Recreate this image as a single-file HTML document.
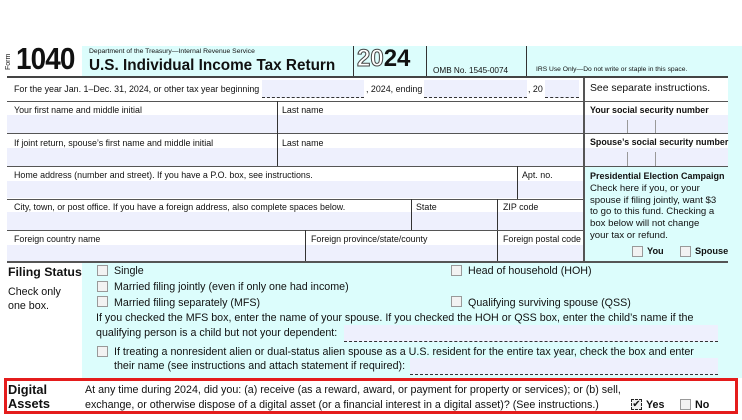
<!DOCTYPE html>
<html><head><style>
*{margin:0;padding:0;box-sizing:border-box}
body{width:742px;height:420px;background:#fff;position:relative;overflow:hidden;font-family:"Liberation Sans",Arial,sans-serif;color:#111}
div,span{position:absolute}
.t{font-size:8.9px;white-space:nowrap}
.f{font-size:10.7px;white-space:nowrap}
.lav{background:#eef0fd}
.cy{background:#dcfdfc}
.w{background:#fff}
.hl{height:1px;background:#555}
.vl{width:1px;background:#333}
.cb{width:11px;height:11px;border:1px solid #999;background:#f2f2f2}
.dash{border-bottom:1px dashed #333}
</style></head><body>
<div class="cy" style="left:82px;top:46px;width:660px;height:32px"></div>
<div class="cy" style="left:728px;top:78px;width:14px;height:300px"></div>
<div class="cy" style="left:584px;top:166px;width:144px;height:96px"></div>
<div class="cy" style="left:82px;top:262px;width:660px;height:116px"></div>
<div style="left:5px;top:70px;font-size:7px;transform:rotate(-90deg);transform-origin:left top;">Form</div>
<div style="left:16px;top:41px;font-size:31px;font-weight:bold;letter-spacing:-1px;transform:scaleX(0.9);transform-origin:left">1040</div>
<div class="t" style="left:89px;top:48px;font-size:6.8px">Department of the Treasury—Internal Revenue Service</div>
<div style="left:89px;top:57px;font-size:15.3px;font-weight:bold;white-space:nowrap">U.S. Individual Income Tax Return</div>
<div class="vl" style="left:353px;top:46px;height:32px"></div>
<div style="left:357px;top:45px;font-size:24px;font-weight:bold;white-space:nowrap"><span style="position:static;color:#fff;-webkit-text-stroke:1px #444">20</span>24</div>
<div class="vl" style="left:426px;top:46px;height:32px"></div>
<div class="t" style="left:433px;top:66px;font-size:8.2px">OMB No. 1545-0074</div>
<div class="vl" style="left:526px;top:46px;height:32px"></div>
<div class="t" style="left:536px;top:66px;font-size:6.7px">IRS Use Only—Do not write or staple in this space.</div>
<div style="left:7px;top:76px;width:721px;height:2px;background:#444"></div>
<div class="t" style="left:14px;top:84px">For the year Jan. 1–Dec. 31, 2024, or other tax year beginning</div>
<div class="lav dash" style="left:262px;top:80px;width:102px;height:18px"></div>
<div class="t" style="left:366px;top:84px">, 2024, ending</div>
<div class="lav dash" style="left:424px;top:80px;width:103px;height:18px"></div>
<div class="t" style="left:528px;top:84px">, 20</div>
<div class="lav dash" style="left:545px;top:80px;width:34px;height:18px"></div>
<div class="t" style="left:590px;top:83px;font-size:10.4px">See separate instructions.</div>
<div class="hl" style="left:7px;top:101px;width:721px"></div>
<div class="lav" style="left:7px;top:115px;width:721px;height:18px"></div>
<div class="lav" style="left:7px;top:148px;width:721px;height:18px"></div>
<div class="lav" style="left:7px;top:181px;width:577px;height:17px"></div>
<div class="lav" style="left:7px;top:212px;width:577px;height:18px"></div>
<div class="lav" style="left:7px;top:245px;width:577px;height:17px"></div>
<div class="t" style="left:14px;top:105px">Your first name and middle initial</div>
<div class="t" style="left:282px;top:105px">Last name</div>
<div class="t" style="left:590px;top:105px;font-weight:bold">Your social security number</div>
<div class="hl" style="left:7px;top:133px;width:721px"></div>
<div class="t" style="left:14px;top:138px">If joint return, spouse’s first name and middle initial</div>
<div class="t" style="left:282px;top:138px">Last name</div>
<div class="t" style="left:590px;top:137px;font-weight:bold">Spouse’s social security number</div>
<div class="hl" style="left:7px;top:166px;width:721px"></div>
<div class="vl" style="left:277px;top:101px;height:65px"></div>
<div class="vl" style="left:627px;top:120px;height:13px;background:#999"></div>
<div class="vl" style="left:655px;top:120px;height:13px;background:#999"></div>
<div class="vl" style="left:627px;top:152px;height:14px;background:#999"></div>
<div class="vl" style="left:655px;top:152px;height:14px;background:#999"></div>
<div class="t" style="left:14px;top:170px">Home address (number and street). If you have a P.O. box, see instructions.</div>
<div class="t" style="left:522px;top:170px">Apt. no.</div>
<div class="vl" style="left:517px;top:166px;height:33px"></div>
<div class="hl" style="left:7px;top:199px;width:577px"></div>
<div class="t" style="left:14px;top:202px">City, town, or post office. If you have a foreign address, also complete spaces below.</div>
<div class="t" style="left:416px;top:202px">State</div>
<div class="t" style="left:503px;top:202px">ZIP code</div>
<div class="vl" style="left:411px;top:199px;height:31px"></div>
<div class="vl" style="left:497px;top:199px;height:63px"></div>
<div class="hl" style="left:7px;top:230px;width:577px"></div>
<div class="t" style="left:14px;top:234px">Foreign country name</div>
<div class="t" style="left:311px;top:234px">Foreign province/state/county</div>
<div class="t" style="left:503px;top:234px">Foreign postal code</div>
<div class="vl" style="left:305px;top:230px;height:32px"></div>
<div style="left:583px;top:78px;width:2px;height:184px;background:#555"></div>
<div style="left:7px;top:261px;width:721px;height:2px;background:#555"></div>
<div class="t" style="left:590px;top:171px;font-weight:bold;font-size:9px">Presidential Election Campaign</div>
<div class="t" style="left:590px;top:183px;font-size:9.6px;line-height:11.7px">Check here if you, or your<br>spouse if filing jointly, want $3<br>to go to this fund. Checking a<br>box below will not change<br>your tax or refund.</div>
<div class="cb" style="left:632px;top:246px"></div>
<div class="t" style="left:647px;top:246px;font-weight:bold;font-size:9.2px">You</div>
<div class="cb" style="left:680px;top:246px"></div>
<div class="t" style="left:695px;top:246px;font-weight:bold;font-size:9.2px">Spouse</div>
<div style="left:8px;top:265px;font-size:12.3px;font-weight:bold;white-space:nowrap">Filing Status</div>
<div class="f" style="left:8px;top:286px;line-height:13.5px">Check only<br>one box.</div>
<div class="cb" style="left:97px;top:265px"></div><div class="f" style="left:114px;top:265px">Single</div>
<div class="cb" style="left:97px;top:281px"></div><div class="f" style="left:114px;top:281px">Married filing jointly (even if only one had income)</div>
<div class="cb" style="left:97px;top:296px"></div><div class="f" style="left:114px;top:297px">Married filing separately (MFS)</div>
<div class="cb" style="left:451px;top:265px"></div><div class="f" style="left:468px;top:265px">Head of household (HOH)</div>
<div class="cb" style="left:451px;top:296px"></div><div class="f" style="left:468px;top:297px">Qualifying surviving spouse (QSS)</div>
<div class="f" style="left:96px;top:312px">If you checked the MFS box, enter the name of your spouse. If you checked the HOH or QSS box, enter the child’s name if the</div>
<div class="f" style="left:96px;top:327px">qualifying person is a child but not your dependent:</div>
<div class="lav dash" style="left:344px;top:325px;width:374px;height:17px"></div>
<div class="cb" style="left:97px;top:346px"></div>
<div class="f" style="left:114px;top:346px">If treating a nonresident alien or dual-status alien spouse as a U.S. resident for the entire tax year, check the box and enter</div>
<div class="f" style="left:114px;top:360px">their name (see instructions and attach statement if required):</div>
<div class="lav dash" style="left:410px;top:358px;width:308px;height:17px"></div>
<div style="left:4px;top:378px;width:734px;height:36px;border:3px solid #e41c1c"></div>
<div class="w" style="left:7px;top:381px;width:75px;height:30px"></div>
<div style="left:8px;top:383px;font-size:12.8px;font-weight:bold;line-height:14px">Digital<br>Assets</div>
<div class="f" style="left:85px;top:384px">At any time during 2024, did you: (a) receive (as a reward, award, or payment for property or services); or (b) sell,</div>
<div class="f" style="left:85px;top:399px">exchange, or otherwise dispose of a digital asset (or a financial interest in a digital asset)? (See instructions.)</div>
<div class="cb" style="left:631px;top:399px;border:1px dashed #222;background:#eee;font-size:10px;line-height:9px;text-align:center">✔</div>
<div class="f" style="left:646px;top:399px;font-weight:bold">Yes</div>
<div class="cb" style="left:680px;top:399px"></div>
<div class="f" style="left:695px;top:399px;font-weight:bold">No</div>
</body></html>
